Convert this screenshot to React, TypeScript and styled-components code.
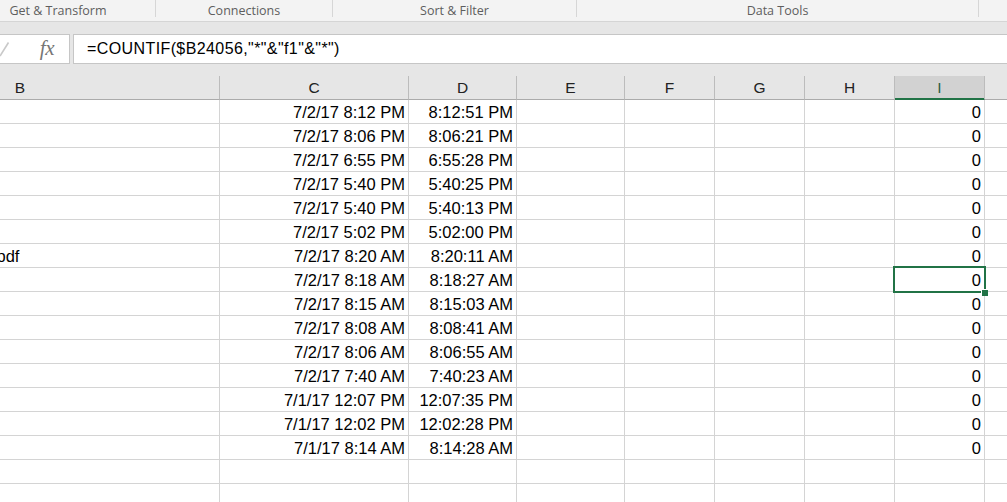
import React from "react";
import styled, { createGlobalStyle } from "styled-components";

const GlobalStyle = createGlobalStyle`
  html, body { margin: 0; padding: 0; background: #ffffff; overflow: hidden; }
  * { box-sizing: border-box; }
`;

const Page = styled.div`
  width: 1007px;
  height: 502px;
  overflow: hidden;
  background: #e6e6e6;
  display: flex;
  flex-direction: column;
`;

const Ribbon = styled.div`
  height: 22px;
  flex: none;
  background: #f3f3f3;
  border-bottom: 1px solid #d5d5d5;
  display: flex;
  align-items: center;
  overflow: hidden;
`;

const RibbonGroup = styled.div<{ $w: number; $shift?: number }>`
  flex: none;
  width: ${(p) => p.$w}px;
  margin-left: ${(p) => (p.$shift ? -p.$shift : 0)}px;
  text-align: center;
  font-family: "Open Sans", "Noto Sans", sans-serif;
  font-size: 12.5px;
  color: #5e5e5e;
  line-height: 22px;
  white-space: nowrap;
`;

const RibbonDivider = styled.div`
  flex: none;
  width: 1px;
  height: 17px;
  align-self: flex-start;
  background: #d6d6d6;
`;

const Band = styled.div`
  height: 12px;
  flex: none;
`;

const FormulaRow = styled.div`
  height: 30px;
  flex: none;
  display: flex;
  gap: 3px;
  overflow: hidden;
`;

const IconBox = styled.div`
  width: 70px;
  flex: none;
  background: #ffffff;
  border: 1px solid #c6c6c6;
  border-left: none;
  display: flex;
  align-items: center;
  justify-content: space-between;
  padding-right: 15px;
`;

const FxLabel = styled.span`
  font-family: "Liberation Serif", "DejaVu Serif", serif;
  font-style: italic;
  font-size: 21px;
  color: #767676;
  letter-spacing: -0.5px;
  margin-top: -2px;
`;

const FormulaInput = styled.div`
  flex: 1;
  background: #ffffff;
  border: 1px solid #c6c6c6;
  border-right: none;
  display: flex;
  align-items: center;
  padding-left: 13px;
  font-family: "Liberation Sans", Arial, sans-serif;
  font-size: 16px;
  letter-spacing: 0.4px;
  color: #000000;
  white-space: nowrap;
`;

const SheetViewport = styled.div`
  flex: 1;
  overflow: hidden;
  margin-top: 12px;
`;

const columns = "399px 189px 108px 108px 90px 90px 90px 90px 200px";

const Grid = styled.div`
  display: grid;
  grid-template-columns: ${columns};
  margin-left: -179px;
`;

const HeaderCell = styled.div<{ $sel?: boolean }>`
  height: 24px;
  background: ${(p) => (p.$sel ? "#d2d2d2" : "#e6e6e6")};
  border-right: 1px solid #bcbcbc;
  border-bottom: 1px solid ${(p) => (p.$sel ? "#217346" : "#ababab")};
  box-shadow: ${(p) => (p.$sel ? "inset 0 -1px 0 #217346" : "none")};
  display: flex;
  align-items: center;
  justify-content: center;
  font-family: "Liberation Sans", Arial, sans-serif;
  font-size: 15.5px;
  color: ${(p) => (p.$sel ? "#2b5f44" : "#222222")};
  padding-top: 1px;
`;

const Cell = styled.div<{ $align?: "left" | "right" }>`
  position: relative;
  height: 24px;
  background: #ffffff;
  border-right: 1px solid #d4d4d4;
  border-bottom: 1px solid #d4d4d4;
  display: flex;
  align-items: flex-end;
  justify-content: ${(p) => (p.$align === "left" ? "flex-start" : "flex-end")};
  padding: 0 3px 1px 3px;
  font-family: "Liberation Sans", Arial, sans-serif;
  font-size: 16.5px;
  line-height: 20px;
  color: #000000;
  white-space: nowrap;
  overflow: visible;
`;

const Selection = styled.div`
  position: absolute;
  left: -2px;
  top: -2px;
  right: -2px;
  bottom: -2px;
  border: 2px solid #217346;
  z-index: 2;
  pointer-events: none;
`;

const FillHandle = styled.div`
  position: absolute;
  right: -4px;
  bottom: -5px;
  width: 7px;
  height: 7px;
  background: #217346;
  border: 1px solid #ffffff;
  border-right: none;
  border-bottom: none;
  z-index: 3;
`;

const rows: [string, string][] = [
  ["7/2/17 8:12 PM", "8:12:51 PM"],
  ["7/2/17 8:06 PM", "8:06:21 PM"],
  ["7/2/17 6:55 PM", "6:55:28 PM"],
  ["7/2/17 5:40 PM", "5:40:25 PM"],
  ["7/2/17 5:40 PM", "5:40:13 PM"],
  ["7/2/17 5:02 PM", "5:02:00 PM"],
  ["7/2/17 8:20 AM", "8:20:11 AM"],
  ["7/2/17 8:18 AM", "8:18:27 AM"],
  ["7/2/17 8:15 AM", "8:15:03 AM"],
  ["7/2/17 8:08 AM", "8:08:41 AM"],
  ["7/2/17 8:06 AM", "8:06:55 AM"],
  ["7/2/17 7:40 AM", "7:40:23 AM"],
  ["7/1/17 12:07 PM", "12:07:35 PM"],
  ["7/1/17 12:02 PM", "12:02:28 PM"],
  ["7/1/17 8:14 AM", "8:14:28 AM"],
];

const headers = ["B", "C", "D", "E", "F", "G", "H", "I", ""];

export default function App() {
  const allRows = [...rows.map((r) => r as [string, string] | null), null, null];
  return (
    <Page>
      <GlobalStyle />
      <Ribbon>
        <RibbonGroup $w={194} $shift={39}>Get &amp; Transform</RibbonGroup>
        <RibbonDivider />
        <RibbonGroup $w={176}>Connections</RibbonGroup>
        <RibbonDivider />
        <RibbonGroup $w={243}>Sort &amp; Filter</RibbonGroup>
        <RibbonDivider />
        <RibbonGroup $w={401}>Data Tools</RibbonGroup>
        <RibbonDivider />
        <RibbonGroup $w={100} />
      </Ribbon>
      <Band />
      <FormulaRow>
        <IconBox>
          <svg width="10" height="16" viewBox="0 0 10 16">
            <path d="M0 15 L8.5 1.5" stroke="#c9c9c9" strokeWidth="1.6" fill="none" />
          </svg>
          <FxLabel>fx</FxLabel>
        </IconBox>
        <FormulaInput>=COUNTIF($B24056,"*"&amp;"f1"&amp;"*")</FormulaInput>
      </FormulaRow>
      <SheetViewport>
        <Grid>
          {headers.map((h, i) => (
            <HeaderCell key={"h" + i} $sel={h === "I"}>
              {h}
            </HeaderCell>
          ))}
          {allRows.map((r, ri) => (
            <React.Fragment key={ri}>
              <Cell $align="left">{ri === 6 ? "Scanned_Document_7.pdf" : ""}</Cell>
              <Cell>{r ? r[0] : ""}</Cell>
              <Cell>{r ? r[1] : ""}</Cell>
              <Cell />
              <Cell />
              <Cell />
              <Cell />
              <Cell>
                {r ? "0" : ""}
                {ri === 7 && (
                  <>
                    <Selection />
                    <FillHandle />
                  </>
                )}
              </Cell>
              <Cell />
            </React.Fragment>
          ))}
        </Grid>
      </SheetViewport>
    </Page>
  );
}
